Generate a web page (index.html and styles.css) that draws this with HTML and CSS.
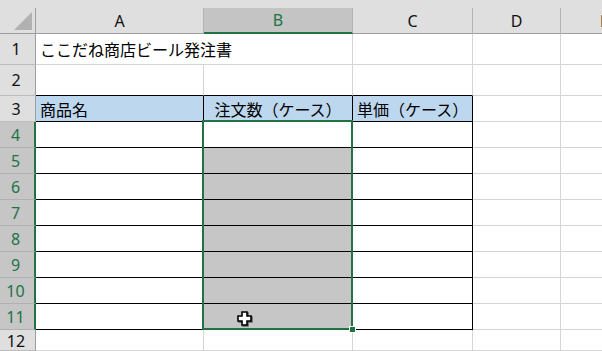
FILE: index.html
```html
<!DOCTYPE html>
<html lang="ja">
<head>
    <meta charset="UTF-8">
    <meta name="viewport" content="width=device-width, initial-scale=1.0">
    <title>ここだね商店ビール発注書</title>
    <link rel="stylesheet" href="styles.css">
</head>
<body>
    <div class="sheet">
        <div class="strip"></div>
        <div class="grid">
            <!-- 列見出し -->
            <div class="corner"><span class="tri"></span></div>
            <div class="colhead">A</div>
            <div class="colhead sel">B</div>
            <div class="colhead">C</div>
            <div class="colhead">D</div>
            <div class="colhead">E</div>

            <!-- 1 -->
            <div class="rowhead">1</div>
            <div class="cell span2">ここだね商店ビール発注書</div>
            <div class="cell"></div>
            <div class="cell"></div>
            <div class="cell"></div>

            <!-- 2 -->
            <div class="rowhead">2</div>
            <div class="cell bb"></div>
            <div class="cell bb"></div>
            <div class="cell bb"></div>
            <div class="cell"></div>
            <div class="cell"></div>

            <!-- 3 -->
            <div class="rowhead">3</div>
            <div class="cell bx hd">商品名</div>
            <div class="cell bx hd center">注文数（ケース）</div>
            <div class="cell bx hd">単価（ケース）</div>
            <div class="cell"></div>
            <div class="cell"></div>

            <!-- 4 -->
            <div class="rowhead sel">4</div>
            <div class="cell bx"></div>
            <div class="cell bx"></div>
            <div class="cell bx"></div>
            <div class="cell"></div>
            <div class="cell"></div>

            <!-- 5 -->
            <div class="rowhead sel">5</div>
            <div class="cell bx"></div>
            <div class="cell bx gray"></div>
            <div class="cell bx"></div>
            <div class="cell"></div>
            <div class="cell"></div>

            <!-- 6 -->
            <div class="rowhead sel">6</div>
            <div class="cell bx"></div>
            <div class="cell bx gray"></div>
            <div class="cell bx"></div>
            <div class="cell"></div>
            <div class="cell"></div>

            <!-- 7 -->
            <div class="rowhead sel">7</div>
            <div class="cell bx"></div>
            <div class="cell bx gray"></div>
            <div class="cell bx"></div>
            <div class="cell"></div>
            <div class="cell"></div>

            <!-- 8 -->
            <div class="rowhead sel">8</div>
            <div class="cell bx"></div>
            <div class="cell bx gray"></div>
            <div class="cell bx"></div>
            <div class="cell"></div>
            <div class="cell"></div>

            <!-- 9 -->
            <div class="rowhead sel">9</div>
            <div class="cell bx"></div>
            <div class="cell bx gray"></div>
            <div class="cell bx"></div>
            <div class="cell"></div>
            <div class="cell"></div>

            <!-- 10 -->
            <div class="rowhead sel">10</div>
            <div class="cell bx"></div>
            <div class="cell bx gray"></div>
            <div class="cell bx"></div>
            <div class="cell"></div>
            <div class="cell"></div>

            <!-- 11 -->
            <div class="rowhead sel">11</div>
            <div class="cell bx"></div>
            <div class="cell bx gray"></div>
            <div class="cell bx"></div>
            <div class="cell"></div>
            <div class="cell"></div>

            <!-- 12 -->
            <div class="rowhead last">12</div>
            <div class="cell"></div>
            <div class="cell"></div>
            <div class="cell"></div>
            <div class="cell"></div>
            <div class="cell"></div>

            <!-- 選択範囲 B4:B11 -->
            <div class="selection">
                <span class="handle"></span>
                <svg class="cursor" width="15" height="15" viewBox="0 0 15 15">
                    <polygon points="5,1 10,1 10,5 14,5 14,10 10,10 10,14 5,14 5,10 1,10 1,5 5,5" fill="#fff" stroke="#000" stroke-width="1.6"/>
                </svg>
            </div>
        </div>
    </div>
</body>
</html>
```

FILE: styles.css
```css
body {
    margin: 0;
    padding: 0;
    background-color: #fff;
    overflow: hidden;
    font-family: 'Noto Sans', 'Noto Sans CJK JP', sans-serif;
}
.sheet {
    width: 602px;
    height: 351px;
    overflow: hidden;
}
.strip {
    height: 8px;
    background-color: #dfdfdf;
}
.grid {
    position: relative;
    display: grid;
    grid-template-columns: 36px 168px 149px 120px 88px 88px;
    grid-template-rows: 26px 31px 31px repeat(9, 26px) 21px;
}
.grid > div {
    box-sizing: border-box;
}
.corner {
    position: relative;
    background-color: #dfdfdf;
    border-right: 1px solid #9e9e9e;
    border-bottom: 1px solid #9e9e9e;
}
.tri {
    position: absolute;
    right: 3px;
    bottom: 3px;
    width: 0;
    height: 0;
    border-left: 18px solid transparent;
    border-bottom: 18px solid #b1b1b1;
}
.colhead {
    background-color: #dfdfdf;
    border-right: 1px solid #b4b4b4;
    border-bottom: 1px solid #9e9e9e;
    color: #111;
    font-size: 16px;
    display: flex;
    align-items: center;
    justify-content: center;
}
.colhead.sel {
    background-color: #c4c4c4;
    color: #217346;
    border-bottom: 2px solid #217346;
}
.rowhead {
    background-color: #dfdfdf;
    border-right: 1px solid #9e9e9e;
    border-bottom: 1px solid #bcbcbc;
    color: #111;
    font-size: 16px;
    line-height: 16px;
    display: flex;
    align-items: center;
    justify-content: center;
    padding-right: 3px;
}
.rowhead.sel {
    background-color: #c6c6c6;
    color: #217346;
    border-right: 2px solid #217346;
    border-bottom-color: #b0b0b0;
}
.rowhead.last {
    padding-top: 2px;
}
.cell {
    border-right: 1px solid #d4d4d4;
    border-bottom: 1px solid #d4d4d4;
    font-family: 'Noto Sans CJK JP', sans-serif;
    font-size: 16px;
    line-height: 16px;
    color: #000;
    white-space: nowrap;
    display: flex;
    align-items: center;
    padding-left: 4px;
}
.span2 {
    grid-column: span 2;
}
.bb {
    border-bottom-color: #000;
}
.bx {
    border-right-color: #000;
    border-bottom-color: #000;
}
.hd {
    background-color: #bdd7ee;
}
.center {
    justify-content: center;
    padding-left: 0;
}
.gray {
    background-color: #c6c6c6;
}
/* 絶対配置にして自動配置の邪魔をしない */
.selection {
    position: absolute;
    grid-column: 3 / 4;
    grid-row: 5 / 13;
    top: -2px;
    left: -2px;
    right: 0;
    bottom: 0;
    border: 2px solid #217346;
    pointer-events: none;
}
.handle {
    position: absolute;
    right: -5px;
    bottom: -5px;
    width: 5px;
    height: 5px;
    background-color: #217346;
    border: 1px solid #fff;
}
.cursor {
    position: absolute;
    left: 33px;
    top: 189px;
    filter: drop-shadow(1px 1px 0 rgba(0, 0, 0, 0.5));
}
```
